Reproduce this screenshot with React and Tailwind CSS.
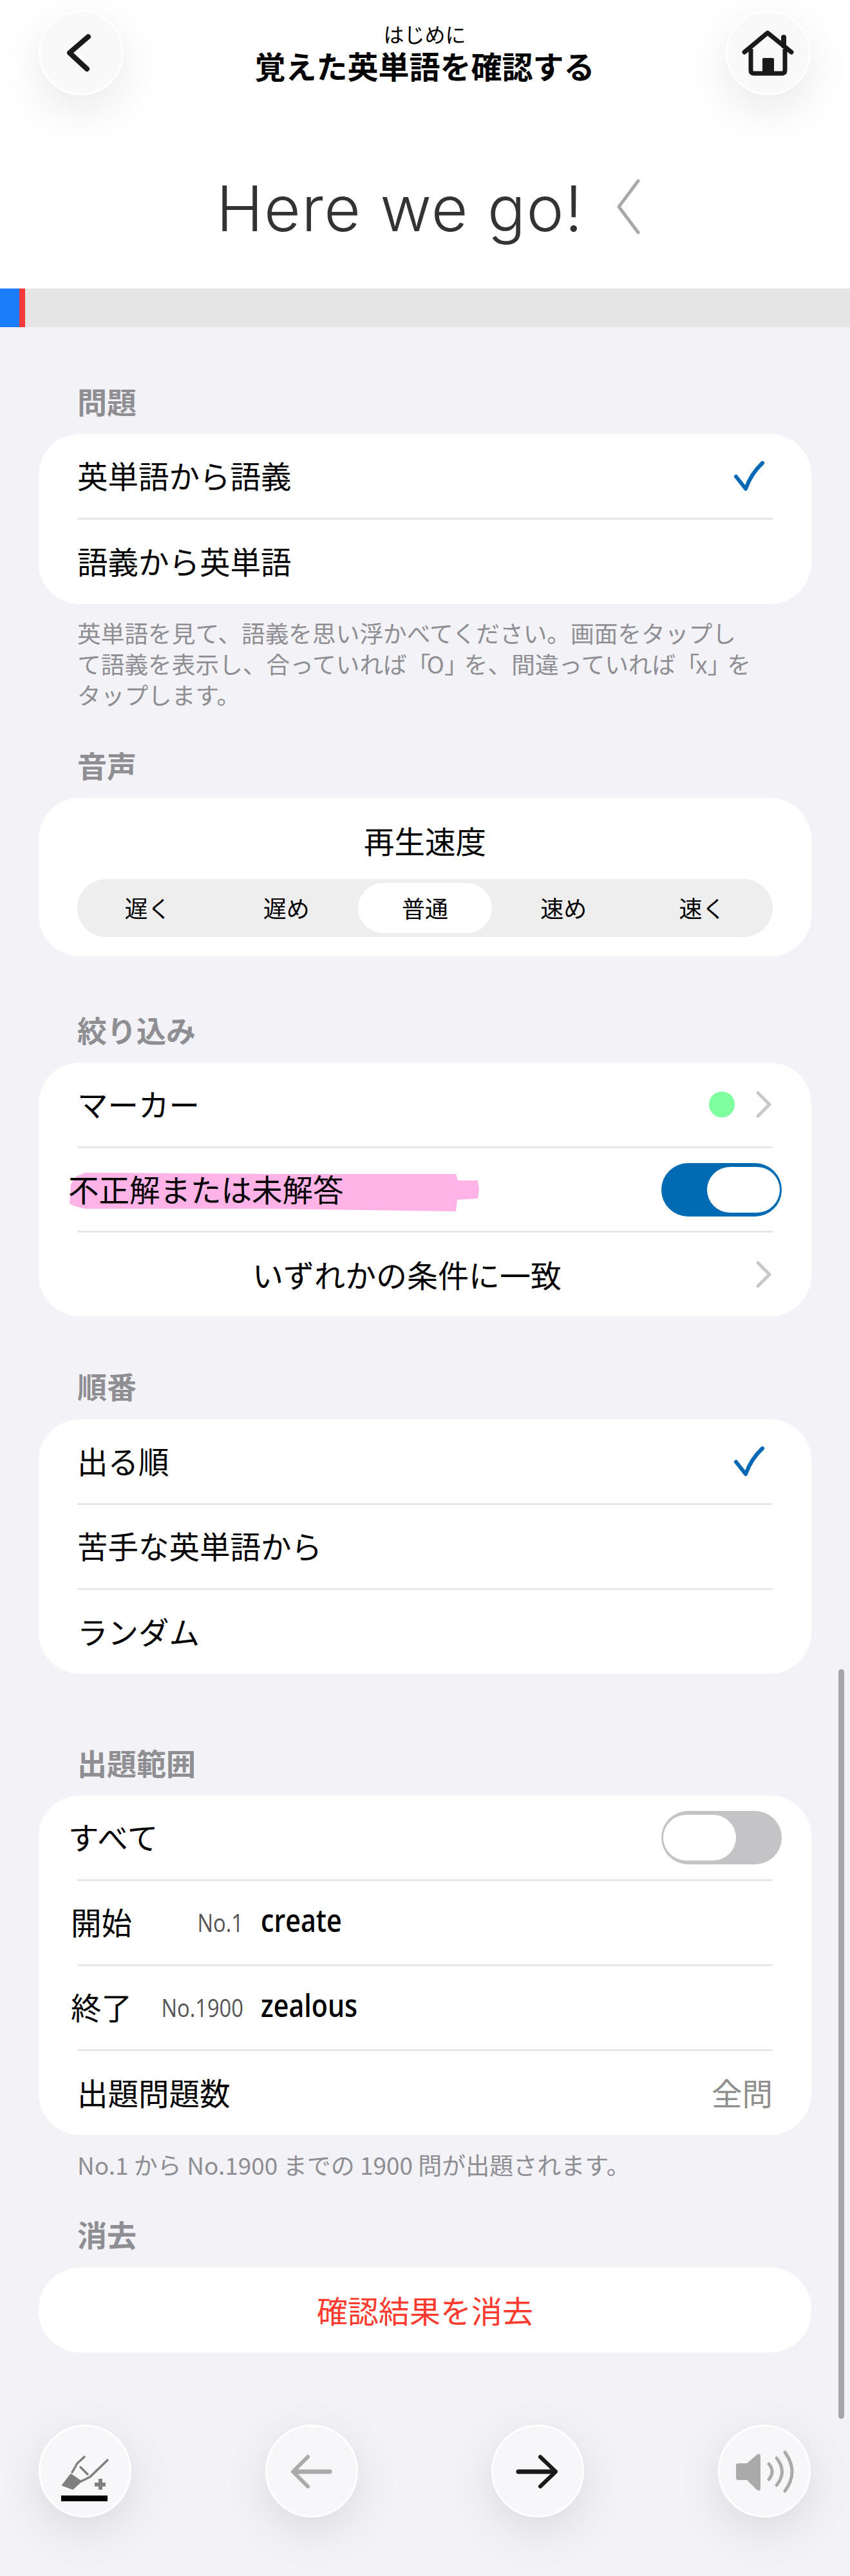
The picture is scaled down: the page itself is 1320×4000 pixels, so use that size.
import React from "react";

const Chevron = () => (
    <svg width="24" height="42" viewBox="0 0 24 42" fill="none" className="shrink-0">
        <path d="M3 3 L21 21 L3 39" stroke="#c7c7cc" strokeWidth="5" strokeLinecap="round" strokeLinejoin="round" />
    </svg>
);

const Check = () => (
    <svg width="50" height="46" viewBox="0 0 50 46" fill="none" className="shrink-0 mt-[3px] ml-[2px]">
        <path d="M5 24 L20 43 Q28 20 46 3" stroke="#0068b4" strokeWidth="6" strokeLinecap="round" strokeLinejoin="round" />
    </svg>
);

const Sep = () => <div className="h-[3px] mx-[60px] bg-[#e8e8ea]" />;

const Toggle = ({ on }) => (
    <div className={on
        ? "flex justify-end w-[187px] h-[83px] rounded-full bg-[#006bb3] px-[3px] py-[6px] shrink-0"
        : "flex justify-start w-[187px] h-[83px] rounded-full bg-[#c4c4c6] px-[3px] py-[6px] shrink-0"}>
        <div className="w-[113px] h-[71px] rounded-full bg-white" />
    </div>
);

const Label = ({ className, children }) => (
    <div className={"h-[44px] leading-[36px] pl-[120px] text-[46px] font-semibold text-[#8e8e93] " + className}>{children}</div>
);

const Card = ({ className = "", children }) => (
    <div className={"mx-[60px] bg-white rounded-[64px] " + className}>{children}</div>
);

const Row = ({ h, children }) => (
    <div className={"flex items-center justify-between pl-[60px] pr-[72px] pb-[3px] text-[47.5px] text-black " + h}>{children}</div>
);

const TopButton = ({ children }) => (
    <div className="w-[132px] h-[132px] rounded-full bg-[#f9f9f9] border-[3px] border-white shadow-[0_24px_70px_rgba(0,0,0,0.09)] shrink-0">
        {children}
    </div>
);

const BottomButton = ({ children }) => (
    <div className="w-[144px] h-[144px] rounded-full bg-[#f7f7fa] border-[3px] border-white shadow-[0_20px_70px_rgba(0,0,0,0.1)] shrink-0">
        {children}
    </div>
);

const speeds = ["遅く", "遅め", "普通", "速め", "速く"];

export default function App() {
    return (
        <div className="relative w-[1320px] h-[4000px] overflow-hidden bg-[#f2f2f7] font-['Noto_Sans_CJK_JP',sans-serif]">

            {/* Header */}
            <div className="h-[448px] bg-white overflow-hidden">
                <div className="flex justify-between pl-[60px] pr-[61px] pt-[16px]">
                    <TopButton>
                        <svg width="126" height="126" viewBox="0 0 126 126" fill="none">
                            <path d="M74 38 L45 63 L72 88" stroke="#1a1a1a" strokeWidth="8" strokeLinecap="round" strokeLinejoin="round" />
                        </svg>
                    </TopButton>
                    <div className="flex flex-col items-center pt-[18px]">
                        <div className="text-[32px] leading-[36px] text-black">はじめに</div>
                        <div className="mt-[2px] text-[48px] leading-[58px] font-bold text-black">覚えた英単語を確認する</div>
                    </div>
                    <TopButton>
                        <svg width="126" height="126" viewBox="0 0 126 126" fill="none">
                            <path d="M26 62 L62 32 L99 62" stroke="#1a1a1a" strokeWidth="7" strokeLinecap="round" strokeLinejoin="round" />
                            <path d="M36 57 V90 Q36 95 41 95 H84 Q89 95 89 90 V57" stroke="#1a1a1a" strokeWidth="7" strokeLinejoin="round" />
                            <path d="M87 52 V39" stroke="#1a1a1a" strokeWidth="8" strokeLinecap="round" />
                            <rect x="54" y="71" width="18" height="24" rx="2" fill="#1a1a1a" />
                        </svg>
                    </TopButton>
                </div>
                <div className="flex items-center pl-[336px] mt-[116px] h-[120px]">
                    <span className="font-['Inter',sans-serif] font-light text-[98px] leading-[120px] tracking-[1.4px] text-[#333333]">Here we go!</span>
                    <svg width="38" height="86" viewBox="0 0 38 86" fill="none" className="ml-[51px] mt-[-6px]">
                        <path d="M34 3 L4 43 L34 83" stroke="#a8a8a8" strokeWidth="5" strokeLinecap="round" strokeLinejoin="round" />
                    </svg>
                </div>
            </div>

            {/* Progress */}
            <div className="flex h-[60px] bg-[#e5e5e5]">
                <div className="w-[30px] bg-[#1a7efb]" />
                <div className="w-[9px] bg-[#f23c3c]" />
            </div>

            <Label className="mt-[96px]">問題</Label>
            <Card className="mt-[26px]">
                <Row h="h-[130px]"><span>英単語から語義</span><Check /></Row>
                <Sep />
                <Row h="h-[131px]"><span>語義から英単語</span></Row>
            </Card>
            <p className="mt-[20px] pl-[120px] text-[36.7px] leading-[48px] text-[#8e8e93]">
                英単語を見て、語義を思い浮かべてください。画面をタップし<br />
                て語義を表示し、合っていれば<span className="tracking-[-14px]">「</span> O<span className="tracking-[-14px]">」</span> を、間違っていれば<span className="tracking-[-14px]">「</span> x<span className="tracking-[-14px]">」</span> を<br />
                タップします。
            </p>

            <Label className="mt-[67px]">音声</Label>
            <Card className="mt-[26px] h-[246px] px-[60px]">
                <div className="h-[126px] pt-[38px] text-center text-[47.5px] leading-[56px] text-black">再生速度</div>
                <div className="grid grid-cols-5 h-[90px] rounded-[45px] bg-[#eeeeee] px-[2px] py-[6px]">
                    {speeds.map((s) => (
                        <div key={s} className={s === "普通"
                            ? "flex items-center justify-center mx-[4px] pb-[3px] rounded-[39px] bg-white text-[36px] text-black"
                            : "flex items-center justify-center pb-[3px] text-[36px] text-black"}>{s}</div>
                    ))}
                </div>
            </Card>

            <Label className="mt-[95px]">絞り込み</Label>
            <Card className="mt-[26px]">
                <Row h="h-[130px]">
                    <span>マーカー</span>
                    <div className="flex items-center gap-[33px] mr-[-10px] mt-[3px]">
                        <div className="w-[40px] h-[40px] rounded-full bg-[#80ff9f]" />
                        <Chevron />
                    </div>
                </Row>
                <Sep />
                <div className="relative flex items-center justify-between h-[128px] pl-[46px] pr-[46px] text-[47.5px] text-black">
                    <svg width="636" height="60" viewBox="0 0 636 60" className="absolute left-[48px] top-[38px]">
                        <path d="M10 6 L24 0 L320 2 L600 2 L603 12 L634 12 L636 26 L634 40 L602 42 L600 60 L300 56 L24 56 L8 52 L0 48 L2 18 Z" fill="#ffb3e6" />
                    </svg>
                    <span className="relative pb-[3px]">不正解または未解答</span>
                    <Toggle on />
                </div>
                <Sep />
                <div className="flex items-center h-[130px] pl-[60px] pr-[62px] text-[48px] text-black">
                    <span className="flex-1 text-center pr-[30px] pb-[3px]">いずれかの条件に一致</span>
                    <Chevron />
                </div>
            </Card>

            <Label className="mt-[89px]">順番</Label>
            <Card className="mt-[27px]">
                <Row h="h-[130px]"><span>出る順</span><Check /></Row>
                <Sep />
                <Row h="h-[129px]"><span>苦手な英単語から</span></Row>
                <Sep />
                <Row h="h-[130px]"><span>ランダム</span></Row>
            </Card>

            <Label className="mt-[119px]">出題範囲</Label>
            <Card className="mt-[26px]">
                <div className="flex items-center justify-between h-[130px] pl-[46px] pr-[46px] text-[47.5px] text-black">
                    <span className="pb-[3px] tracking-[1px]">すべて</span>
                    <Toggle />
                </div>
                <Sep />
                <div className="flex items-center h-[129px] pl-[50px] text-[47.5px] text-black">
                    <span className="w-[100px] whitespace-nowrap pb-[3px]">開始</span>
                    <span className="w-[168px] text-right font-['Open_Sans',sans-serif] text-[38px] text-[#555555] scale-x-[0.86] origin-right">No.1</span>
                    <span className="ml-[27px] pb-[8px] font-['Open_Sans',sans-serif] font-semibold text-[49px] scale-x-[0.84] origin-left">create</span>
                </div>
                <Sep />
                <div className="flex items-center h-[129px] pl-[50px] text-[47.5px] text-black">
                    <span className="w-[100px] whitespace-nowrap pb-[3px]">終了</span>
                    <span className="w-[168px] text-right font-['Open_Sans',sans-serif] text-[38px] text-[#555555] scale-x-[0.86] origin-right">No.1900</span>
                    <span className="ml-[27px] pb-[8px] font-['Open_Sans',sans-serif] font-semibold text-[49px] scale-x-[0.84] origin-left">zealous</span>
                </div>
                <Sep />
                <Row h="h-[130px]">
                    <span>出題問題数</span>
                    <span className="mr-[-12px] text-[#8e8e8e]">全問</span>
                </Row>
            </Card>
            <p className="mt-[22px] pl-[120px] text-[37px] leading-[48px] text-[#8e8e93]">No.1 から No.1900 までの 1900 問が出題されます。</p>

            <Label className="mt-[65px]">消去</Label>
            <Card className="mt-[27px]">
                <div className="flex items-center justify-center h-[132px] pb-[3px] text-[48px] text-[#ff3b30]">確認結果を消去</div>
            </Card>

            {/* Bottom toolbar */}
            <div className="flex justify-between mt-[112px] pl-[60px] pr-[61px]">
                <BottomButton>
                    <svg width="138" height="138" viewBox="0 0 138 138" fill="none">
                        <path d="M34 91 L47 74 L63 85 L50 97 Z" fill="#7f7f7f" stroke="#7f7f7f" strokeWidth="2" strokeLinejoin="round" />
                        <path d="M68 47 L57 57 L49 71" stroke="#7f7f7f" strokeWidth="3.5" strokeLinecap="round" strokeLinejoin="round" />
                        <path d="M63 85 L77 78 L104 52" stroke="#7f7f7f" strokeWidth="3.5" strokeLinecap="round" strokeLinejoin="round" />
                        <path d="M62 63 L73 74" stroke="#7f7f7f" strokeWidth="3.5" strokeLinecap="round" />
                        <path d="M93 81 V98 M84 90 H101" stroke="#7f7f7f" strokeWidth="6" />
                        <rect x="32" y="107" width="72" height="9" fill="#000000" />
                    </svg>
                </BottomButton>
                <BottomButton>
                    <svg width="138" height="138" viewBox="0 0 138 138" fill="none">
                        <path d="M63 47 L40 70 L63 93" stroke="#aaaaaa" strokeWidth="6" strokeLinecap="round" strokeLinejoin="round" />
                        <path d="M42 70 H97" stroke="#aaaaaa" strokeWidth="7" strokeLinecap="round" />
                    </svg>
                </BottomButton>
                <BottomButton>
                    <svg width="138" height="138" viewBox="0 0 138 138" fill="none">
                        <path d="M73 47 L97 70 L73 93" stroke="#1a1a1a" strokeWidth="6" strokeLinecap="round" strokeLinejoin="round" />
                        <path d="M39 70 H95" stroke="#1a1a1a" strokeWidth="7" strokeLinecap="round" />
                    </svg>
                </BottomButton>
                <BottomButton>
                    <svg width="138" height="138" viewBox="0 0 138 138" fill="none">
                        <path d="M25 60 Q25 57 29 57 H42 L57 44 Q63 40 63 47 V95 Q63 102 57 98 L42 83 H29 Q25 83 25 80 Z" fill="#aaaaaa" />
                        <path d="M76 58 Q86 70 76 82" stroke="#aaaaaa" strokeWidth="5" strokeLinecap="round" />
                        <path d="M88 49 Q105 70 88 91" stroke="#aaaaaa" strokeWidth="5" strokeLinecap="round" />
                        <path d="M101 40 Q123 70 101 100" stroke="#aaaaaa" strokeWidth="5" strokeLinecap="round" />
                    </svg>
                </BottomButton>
            </div>

            {/* Scroll indicator */}
            <div className="absolute left-[1302px] top-[2592px] w-[9px] h-[1164px] rounded-full bg-[#a5a5aa]" />
        </div>
    );
}
